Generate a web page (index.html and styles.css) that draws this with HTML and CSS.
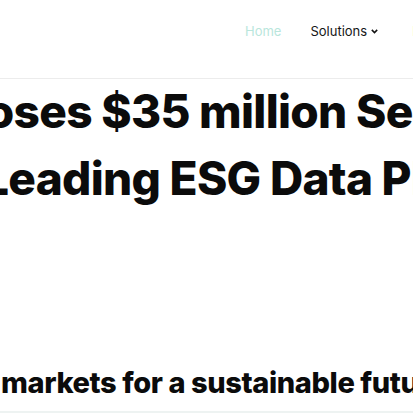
FILE: index.html
```html
<!DOCTYPE html>
<html lang="en">
<head>
<meta charset="utf-8">
<link rel="stylesheet" href="styles.css">
</head>
<body>
<header class="site-header">
  <nav class="nav">
    <a class="nav-item active" href="#">Home</a>
    <a class="nav-item" href="#">Solutions
      <svg class="chev" width="7" height="5" viewBox="0 0 7 5"><path d="M0.8 0.9 L3.5 3.6 L6.2 0.9" fill="none" stroke="#111" stroke-width="1.5"/></svg>
    </a>
    <a class="nav-item" href="#">Insights</a>
  </nav>
</header>
<main class="hero">
  <h1 class="title">
    <span class="line line-1">Closes $35 million Series</span>
    <span class="line line-2">Leading ESG Data Platform</span>
  </h1>
  <p class="tagline"><span class="tag-inner">markets for a sustainable future</span></p>
</main>
</body>
</html>
```

FILE: styles.css
```css
html, body {
  margin: 0;
  padding: 0;
  background: #fff;
  overflow: hidden;
}
body {
  width: 413px;
  height: 413px;
  font-family: Inter, "Liberation Sans", sans-serif;
  color: #0b0b0b;
  display: flex;
  flex-direction: column;
}
.site-header {
  height: 78px;
  border-bottom: 1px solid #ececec;
  display: flex;
  align-items: flex-start;
}
.nav {
  display: flex;
  align-items: center;
  gap: 29px;
  padding-left: 245px;
  padding-top: 23px;
  white-space: nowrap;
}
.nav-item {
  font-size: 13px;
  color: #161616;
  text-decoration: none;
  display: flex;
  align-items: center;
  gap: 4px;
}
.nav-item + .nav-item + .nav-item {
  margin-left: 5px;
}
.nav-item.active {
  color: #b9e6dc;
}
.chev { display: block; margin-top: 1px; }
.hero {
  flex: 1;
  display: flex;
  flex-direction: column;
  overflow: hidden;
  border-bottom: 2px solid #eef3f2;
}
.title {
  margin: -1px 0 0;
  padding: 0;
  font-size: 46px;
  font-weight: 800;
  letter-spacing: -0.7px;
  line-height: 67px;
}
.line {
  display: block;
  white-space: nowrap;
}
.line-1 { margin-left: -60px; }
.line-2 { margin-left: -17px; }
.tagline {
  margin: auto 0 10px;
  font-size: 29px;
  font-weight: 800;
  letter-spacing: -0.4px;
  white-space: nowrap;
  line-height: 36px;
}
.tag-inner { display: block; padding-left: 1px; }
```
